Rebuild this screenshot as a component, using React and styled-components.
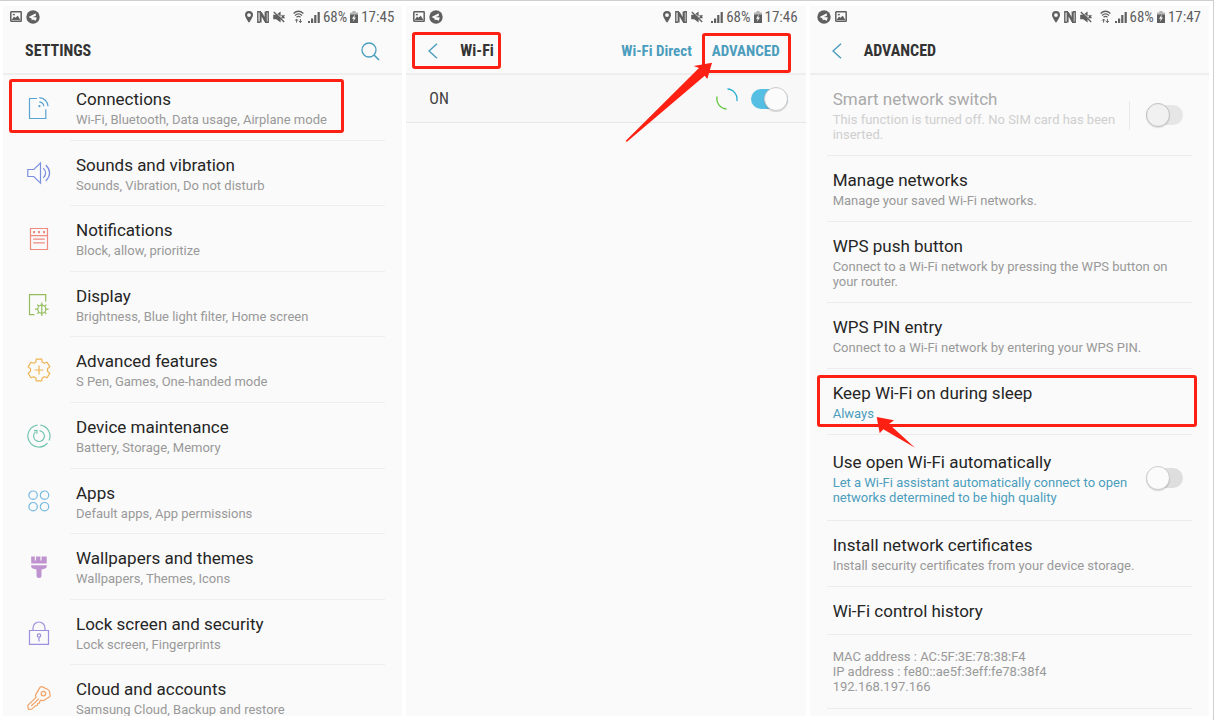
import React from "react";
import styled, { createGlobalStyle } from "styled-components";

const GlobalStyle = createGlobalStyle`
  * {
    box-sizing: border-box;
  }
  body {
    margin: 0;
    background: #ffffff;
    font-family: Roboto, "Liberation Sans", sans-serif;
  }
`;

const Board = styled.main`
  display: grid;
  grid-template-columns: repeat(3, minmax(0, 1fr));
  gap: 4px;
  height: 100vh;
  padding: 5px 4px 4px 3px;
  border-top: solid 1px #cfcfcf;
  border-right: solid 1px #cfcfcf;
`;

const Phone = styled.section`
  display: flex;
  flex-direction: column;
  min-height: 0;
  overflow: hidden;
  background: #fafafa;
`;

const StatusBar = styled.div`
  display: flex;
  flex: none;
  align-items: center;
  justify-content: space-between;
  height: 21px;
  padding: 0 8px 0 7px;
  color: #5f5f5f;
  font-family: "Roboto Condensed", Roboto, sans-serif;
  font-size: 15px;
  line-height: 20px;
`;

const StatusGroup = styled.div`
  display: flex;
  align-items: center;
  gap: ${(props) => props.$gap || 3}px;
`;

const Header = styled.header`
  display: flex;
  flex: none;
  align-items: center;
  justify-content: space-between;
  height: 48px;
  padding: 2px 22px 0;
  border-bottom: solid 2px #eeeeee;
`;

const HeaderTitle = styled.h1`
  margin: 0;
  color: #333333;
  font-family: "Roboto Condensed", Roboto, sans-serif;
  font-size: 16px;
  font-weight: bold;
  line-height: 20px;
`;

const HeaderStart = styled.div`
  position: relative;
  display: flex;
  align-items: center;
  gap: 22px;
`;

const HeaderLinks = styled.nav`
  display: flex;
  gap: 20px;
  margin-right: 4px;
`;

const HeaderLink = styled.a`
  position: relative;
  color: #4b9dbd;
  font-family: "Roboto Condensed", Roboto, sans-serif;
  font-size: 15px;
  font-weight: bold;
  line-height: 20px;
  text-decoration: none;
`;

const IconButton = styled.button`
  display: flex;
  padding: 0;
  border: none;
  background: none;
  color: #4b9dbd;
  cursor: pointer;
`;

const Highlight = styled.span`
  position: absolute;
  inset: ${(props) => props.$inset};
  z-index: 1;
  border: solid 3px #fd2013;
  border-radius: 3px;
  pointer-events: none;
`;

const AdvancedArrow = styled.svg`
  position: absolute;
  top: 21px;
  right: 67px;
  z-index: 2;
  pointer-events: none;
`;

const SleepArrow = styled.svg`
  position: absolute;
  top: 48px;
  left: 49px;
  z-index: 2;
  pointer-events: none;
`;

const CategoryList = styled.ul`
  display: grid;
  flex: 0 0 656px;
  grid-template-rows: repeat(10, 1fr);
  margin: 0;
  padding: 0;
  list-style: none;
`;

const CategoryItem = styled.li`
  position: relative;
  display: grid;
  min-height: 0;
`;

const CategoryLink = styled.a`
  display: grid;
  grid-template-columns: 67px 1fr;
  align-items: center;
  min-height: 0;
  padding-right: 17px;
  text-decoration: none;
`;

const CategoryIcon = styled.svg`
  margin-left: 24px;
  fill: none;
  stroke: ${(props) => props.$color};
  stroke-width: 1.2;
  color: ${(props) => props.$color};
`;

const CategoryText = styled.span`
  align-self: stretch;
  padding: 13px 6px 0;
  border-bottom: solid 1px #eeeeee;
`;

const ItemTitle = styled.span`
  display: block;
  color: ${(props) => (props.$disabled ? "#a9a9a9" : "#252525")};
  font-size: 17px;
  line-height: 22px;
`;

const ItemNote = styled.span`
  display: block;
  margin-top: 2px;
  color: ${(props) => props.$color || "#999999"};
  font-size: 13px;
  line-height: 15px;
`;

const WifiRow = styled.label`
  display: flex;
  flex: none;
  align-items: center;
  height: 48px;
  padding: 0 18px 0 23px;
  border-bottom: solid 1px #e6e6e6;
  background: #f8f8f8;
`;

const WifiState = styled.span`
  flex: 1;
  color: #404040;
  font-family: "Roboto Condensed", Roboto, sans-serif;
  font-size: 16px;
`;

const Spinner = styled.svg`
  margin-right: 13px;
`;

const Toggle = styled.input`
  display: flex;
  flex: none;
  align-items: center;
  justify-content: ${(props) => (props.$on ? "flex-end" : "flex-start")};
  width: 37px;
  height: 20px;
  margin: 0;
  border-radius: 10px;
  background: ${(props) => (props.$on ? "#55bee3" : "#dedede")};
  opacity: ${(props) => (props.disabled ? 0.7 : 1)};
  appearance: none;

  &::before {
    content: "";
    flex: none;
    width: 22px;
    height: 22px;
    border: solid 1px ${(props) => (props.disabled ? "#a8a8a8" : "#cccccc")};
    border-radius: 50%;
    background: ${(props) => (props.disabled ? "#eeeeee" : "#fbfbfb")};
    box-shadow: 0 1px 1px rgba(0, 0, 0, 0.15);
  }
`;

const OptionList = styled.ul`
  margin: 0;
  padding: 0 17px;
  list-style: none;
`;

const OptionItem = styled.li`
  position: relative;
  border-bottom: solid 1px #ececec;
`;

const OptionLink = styled.a`
  display: block;
  padding: 13px 6px ${(props) => (props.$single ? 12 : 13)}px;
  text-decoration: none;
`;

const OptionSwitch = styled.label`
  display: flex;
  align-items: center;
  padding: ${(props) => (props.$roomy ? "16px 9px 15px 6px" : "13px 9px 13px 6px")};
`;

const OptionText = styled.span`
  flex: 1;
  padding-right: 8px;
`;

const Divider = styled.span`
  width: 1px;
  height: 29px;
  margin-right: 16px;
  background: #e9e9e9;
`;

const Addresses = styled.p`
  margin: 0;
  padding: 14px 6px 14px;
  color: #999999;
  font-size: 13px;
  line-height: 15px;
`;

// Six-lobed gear outline around (12, 12)
const gearPoints = [0, 60, 120, 180, 240, 300]
  .flatMap((base) =>
    [
      [11.2, -14],
      [11.2, 14],
      [8.6, 21],
      [8.6, 39],
    ].map(([radius, offset]) => {
      const angle = ((base + offset - 90) * Math.PI) / 180;
      return `${(12 + radius * Math.cos(angle)).toFixed(1)},${(
        12 +
        radius * Math.sin(angle)
      ).toFixed(1)}`;
    })
  )
  .join(" ");

const categories = [
  {
    title: "Connections",
    note: "Wi-Fi, Bluetooth, Data usage, Airplane mode",
    color: "#59a5d2",
    highlight: true,
    icon: (
      <>
        <path d="M10 2.5H2.5v20h16.3v-9.3" />
        <path d="M12.3 1.7a9 9 0 0 1 8.7 8.6M12.3 5.8a5 5 0 0 1 4.5 4.5" />
        <circle cx="12.4" cy="10.2" r="1.1" fill="currentColor" stroke="none" />
      </>
    ),
  },
  {
    title: "Sounds and vibration",
    note: "Sounds, Vibration, Do not disturb",
    color: "#7b8fe0",
    icon: (
      <>
        <path d="M.8 8.5h6l6.7-6.600v20.200l-6.700-6.600h-6z" />
        <path d="M16.300 7.200q4.600 4.800 0 9.600M18.800 4q7.600 8 0 16" />
      </>
    ),
  },
  {
    title: "Notifications",
    note: "Block, allow, prioritize",
    color: "#f08b80",
    icon: (
      <>
        <path d="M3.500 1.500h17v21h-17zM3.500 8.700h17M6.200 12.200h11.600M6.200 15.800h11.600" />
        <path d="M6 5.200h2M11 5.200h2M16 5.200h2" strokeWidth="2.2" />
      </>
    ),
  },
  {
    title: "Display",
    note: "Brightness, Blue light filter, Home screen",
    color: "#93bd5b",
    icon: (
      <>
        <path d="M7.400 21.700H2.500v-20h16.200v7" />
        <circle cx="14.8" cy="16.2" r="4" />
        <path d="M14.800 9.400v13.600M8 16.200h2.800M18.800 16.200h2.800M10.200 11.600l1.700 1.700M17.700 19.100l1.700 1.700M19.400 11.600l-1.700 1.700M11.900 19.100l-1.700 1.700" />
      </>
    ),
  },
  {
    title: "Advanced features",
    note: "S Pen, Games, One-handed mode",
    color: "#f0b352",
    icon: (
      <>
        <polygon points={gearPoints} strokeLinejoin="round" />
        <path d="M12 7.600v8.800M7.600 12h8.800" />
      </>
    ),
  },
  {
    title: "Device maintenance",
    note: "Battery, Storage, Memory",
    color: "#72c5b1",
    icon: (
      <>
        <path d="M10.600 1.100A11 11 0 1 0 20.400 19M13.400 1.100A11 11 0 0 1 22 16.600" />
        <path d="M12.600 6.700A5.400 5.400 0 1 1 8.300 8.100M7 6.700l2.900-.3v3.400" />
      </>
    ),
  },
  {
    title: "Apps",
    note: "Default apps, App permissions",
    color: "#75bae2",
    icon: (
      <>
        <circle cx="6.1" cy="6.2" r="4.2" />
        <circle cx="17.5" cy="6.2" r="4.2" />
        <circle cx="6.1" cy="17.7" r="4.2" />
        <circle cx="17.5" cy="17.7" r="4.2" />
      </>
    ),
  },
  {
    title: "Wallpapers and themes",
    note: "Wallpapers, Themes, Icons",
    color: "#bf93cf",
    icon: (
      <path
        d="M4.200 1.400h3.600v4h1.200v-4h4.400v4h1.200v-4h5.100v7H4.200zM4.200 10.200h15.500v1.600q-.4 2.200-5.200 2.600v6.200a2.500 2.500 0 0 1-5 0v-6.200q-4.900-.4-5.300-2.600z"
        fill="currentColor"
        stroke="none"
      />
    ),
  },
  {
    title: "Lock screen and security",
    note: "Lock screen, Fingerprints",
    color: "#9d90e0",
    icon: (
      <>
        <path d="M2.500 9.500h19v13.800h-19zM6 9.500V7a6 6 0 0 1 12 0v2.500M12 16.200v4.200" />
        <circle cx="12" cy="14.5" r="1.7" />
      </>
    ),
  },
  {
    title: "Cloud and accounts",
    note: "Samsung Cloud, Backup and restore",
    color: "#f2a267",
    icon: (
      <>
        <path
          d="M13.200 1.100q1-.8 2.200-.2l5.500 2.600q1.200.6 1.500 1.800l.7 3.800q.2 1.400-1 2l-5.300 3.300q-1.200.6-2.600-.4l-1.400 1.200-.3 2-2 .3-.3 2-2 .4-3.400 3.200-3.400.3-.6-4 8.300-8q-.9-1.500-.4-2.800zM4.200 20l7.800-7.400"
          strokeLinejoin="round"
        />
        <circle cx="16.4" cy="7.6" r="2.3" />
      </>
    ),
  },
];

function PictureIcon() {
  return (
    <svg width="12" height="11" viewBox="0 0 12 11" aria-hidden="true">
      <rect x="0.8" y="0.8" width="10.4" height="9.4" rx="0.5" fill="none" stroke="currentColor" strokeWidth="1.5" />
      <path d="M1.600 9 4 5.600l1.300 1.200L7.800 4.800 10.400 9z" fill="currentColor" />
      <path d="M2.800 3.600h2" stroke="currentColor" strokeWidth="1.4" />
    </svg>
  );
}

function MessageIcon() {
  return (
    <svg width="14" height="14" viewBox="0 0 14 14" aria-hidden="true">
      <circle cx="7" cy="7" r="6.7" fill="currentColor" />
      <path d="M2.600 7 9.800 3.200v2.700L6.600 7l4.200.4-1 3.300-3-1.300-.9 1-.5-1.900z" fill="#fafafa" />
    </svg>
  );
}

function StatusIcons({ time, wifi }) {
  return (
    <StatusGroup>
      <StatusGroup $gap={8}>
        <StatusGroup $gap={4}>
          <svg width="8" height="12" viewBox="0 0 8 12" aria-hidden="true">
            <path
              d="M4 0a4 4 0 0 1 4 4c0 2.600-4 7.800-4 7.800S0 6.600 0 4a4 4 0 0 1 4-4zm0 2.200a1.900 1.900 0 1 0 0 3.800 1.900 1.900 0 0 0 0-3.800z"
              fill="currentColor"
            />
          </svg>
          <svg width="12" height="12" viewBox="0 0 12 12" aria-hidden="true">
            <path
              d="M4 .8H.8v10.400H3M8 11.200h3.200V.8H9"
              fill="none"
              stroke="currentColor"
              strokeWidth="1.4"
            />
            <path d="M2.600 1h2.200l2.800 5V.4h2.200V11H7.600L4.600 5.600V11.600h-2z" fill="currentColor" />
          </svg>
          <svg width="12" height="12" viewBox="0 0 12 12" aria-hidden="true">
            <path d="M.2 3.800h3L7.600.6v10.800L3.200 8.200h-3z" fill="currentColor" />
            <path d="M1.800.6l9.600 9.200" stroke="#fafafa" strokeWidth="1" />
            <path d="M.8 1l10.400 10M8.600 4.200l2.800 3M11.400 4.200l-2.800 3" stroke="currentColor" strokeWidth="1.3" />
          </svg>
        </StatusGroup>
        <StatusGroup $gap={4}>
          {wifi && (
            <svg width="11" height="13" viewBox="0 0 11 13" fill="none" stroke="currentColor" aria-hidden="true">
              <path d="M.6 3.400q4.900-4.400 9.800 0M2 5.400q3.500-3 7 0M3.500 7.200q2-1.600 4 0" strokeWidth="1.3" />
              <path d="M3.600 12.600V9.200M2.200 10.600l1.400-1.600L5 10.600M7.400 9v3.400M6 11l1.400 1.600L8.800 11" strokeWidth="1" />
            </svg>
          )}
          <svg width="12" height="12" viewBox="0 0 12 12" aria-hidden="true">
            <path d="M0 10h2v2H0zM3 7.500h2.200V12H3zM6.200 4h2.200v8H6.200zM9.600 1h2.200v11H9.600z" fill="currentColor" />
          </svg>
        </StatusGroup>
      </StatusGroup>
      <span>68%</span>
      <svg width="8" height="12" viewBox="0 0 8 12" aria-hidden="true">
        <path d="M2.400 0h3.200v1.400H8V4H0V1.400h2.400z" fill="#b5b5b5" />
        <path d="M0 3.600h8V12H0z" fill="currentColor" />
        <path d="M4.800 3.600 2 7.800h1.700L3 10.800l3-4.200H4.300z" fill="#fafafa" />
      </svg>
      <span>{time}</span>
    </StatusGroup>
  );
}

function BackButton() {
  return (
    <IconButton type="button" aria-label="Back">
      <svg width="10" height="16" viewBox="0 0 10 16" aria-hidden="true">
        <path d="M9 .8 1 8l8 7.200" fill="none" stroke="currentColor" strokeWidth="1.5" />
      </svg>
    </IconButton>
  );
}

function Option({ title, note, noteColor, single, children }) {
  return (
    <OptionItem>
      <OptionLink href="#" $single={single}>
        <ItemTitle>{title}</ItemTitle>
        {note && <ItemNote $color={noteColor}>{note}</ItemNote>}
      </OptionLink>
      {children}
    </OptionItem>
  );
}

export default function App() {
  return (
    <>
      <GlobalStyle />
      <Board>
        <Phone>
          <StatusBar>
            <StatusGroup $gap={4}>
              <PictureIcon />
              <MessageIcon />
            </StatusGroup>
            <StatusIcons time="17:45" wifi />
          </StatusBar>
          <Header>
            <HeaderTitle>SETTINGS</HeaderTitle>
            <IconButton type="button" aria-label="Search">
              <svg width="19" height="19" viewBox="0 0 19 19" fill="none" stroke="currentColor" aria-hidden="true">
                <circle cx="8" cy="8" r="7" strokeWidth="1.3" />
                <path d="M13 13l5 5" strokeWidth="1.6" />
              </svg>
            </IconButton>
          </Header>
          <CategoryList>
            {categories.map((item) => (
              <CategoryItem key={item.title}>
                <CategoryLink href="#">
                  <CategoryIcon width="24" height="24" viewBox="0 0 24 24" $color={item.color} aria-hidden="true">
                    {item.icon}
                  </CategoryIcon>
                  <CategoryText>
                    <ItemTitle>{item.title}</ItemTitle>
                    <ItemNote>{item.note}</ItemNote>
                  </CategoryText>
                </CategoryLink>
                {item.highlight && <Highlight $inset="4px 58px 8px 6px" />}
              </CategoryItem>
            ))}
          </CategoryList>
        </Phone>

        <Phone>
          <StatusBar>
            <StatusGroup $gap={4}>
              <PictureIcon />
              <MessageIcon />
            </StatusGroup>
            <StatusIcons time="17:46" />
          </StatusBar>
          <Header>
            <HeaderStart>
              <BackButton />
              <HeaderTitle>Wi-Fi</HeaderTitle>
              <Highlight $inset="-9px -7px -8px -16px" />
            </HeaderStart>
            <HeaderLinks>
              <HeaderLink href="#">Wi-Fi Direct</HeaderLink>
              <HeaderLink href="#">
                ADVANCED
                <Highlight $inset="-8px -11px -12px -10px" />
                <AdvancedArrow width="88" height="80" viewBox="0 0 88 80" aria-hidden="true">
                  <path d="M87 .7 68.700 4l5.300 2L.5 79l1.500.8 77.700-66.100 2.600 3.300z" fill="#fd2013" />
                </AdvancedArrow>
              </HeaderLink>
            </HeaderLinks>
          </Header>
          <WifiRow>
            <WifiState>ON</WifiState>
            <Spinner width="22" height="22" viewBox="0 0 22 22" fill="none" strokeWidth="1.3" aria-hidden="true">
              <path d="M11.500 1A10 10 0 0 1 20.800 13" stroke="#29aed3" />
              <path d="M1.200 8.500A10 10 0 0 0 10.500 21" stroke="#62c643" />
            </Spinner>
            <Toggle type="checkbox" $on defaultChecked />
          </WifiRow>
        </Phone>

        <Phone>
          <StatusBar>
            <StatusGroup $gap={4}>
              <MessageIcon />
              <PictureIcon />
            </StatusGroup>
            <StatusIcons time="17:47" wifi />
          </StatusBar>
          <Header>
            <HeaderStart>
              <BackButton />
              <HeaderTitle>ADVANCED</HeaderTitle>
            </HeaderStart>
          </Header>
          <OptionList>
            <OptionItem>
              <OptionSwitch>
                <OptionText>
                  <ItemTitle $disabled>Smart network switch</ItemTitle>
                  <ItemNote $color="#cfcfcf">
                    This function is turned off. No SIM card has been inserted.
                  </ItemNote>
                </OptionText>
                <Divider />
                <Toggle type="checkbox" disabled />
              </OptionSwitch>
            </OptionItem>
            <Option title="Manage networks" note="Manage your saved Wi-Fi networks." />
            <Option
              title="WPS push button"
              note="Connect to a Wi-Fi network by pressing the WPS button on your router."
            />
            <Option title="WPS PIN entry" note="Connect to a Wi-Fi network by entering your WPS PIN." />
            <Option title="Keep Wi-Fi on during sleep" note="Always" noteColor="#4b9dbd">
              <Highlight $inset="6px -5px 7px -10px" />
              <SleepArrow width="40" height="32" viewBox="0 0 40 32" aria-hidden="true">
                <path d="M.7 0 18 3.300 13 7l26 23.700L7.300 12.300 3.700 16.300z" fill="#fd2013" />
              </SleepArrow>
            </Option>
            <OptionItem>
              <OptionSwitch $roomy>
                <OptionText>
                  <ItemTitle>Use open Wi-Fi automatically</ItemTitle>
                  <ItemNote $color="#4b9dbd">
                    Let a Wi-Fi assistant automatically connect to open networks determined to be high quality
                  </ItemNote>
                </OptionText>
                <Toggle type="checkbox" />
              </OptionSwitch>
            </OptionItem>
            <Option
              title="Install network certificates"
              note="Install security certificates from your device storage."
            />
            <Option title="Wi-Fi control history" single />
            <OptionItem>
              <Addresses>
                MAC address : AC:5F:3E:78:38:F4
                <br />
                IP address : fe80::ae5f:3eff:fe78:38f4
                <br />
                192.168.197.166
              </Addresses>
            </OptionItem>
          </OptionList>
        </Phone>
      </Board>
    </>
  );
}
